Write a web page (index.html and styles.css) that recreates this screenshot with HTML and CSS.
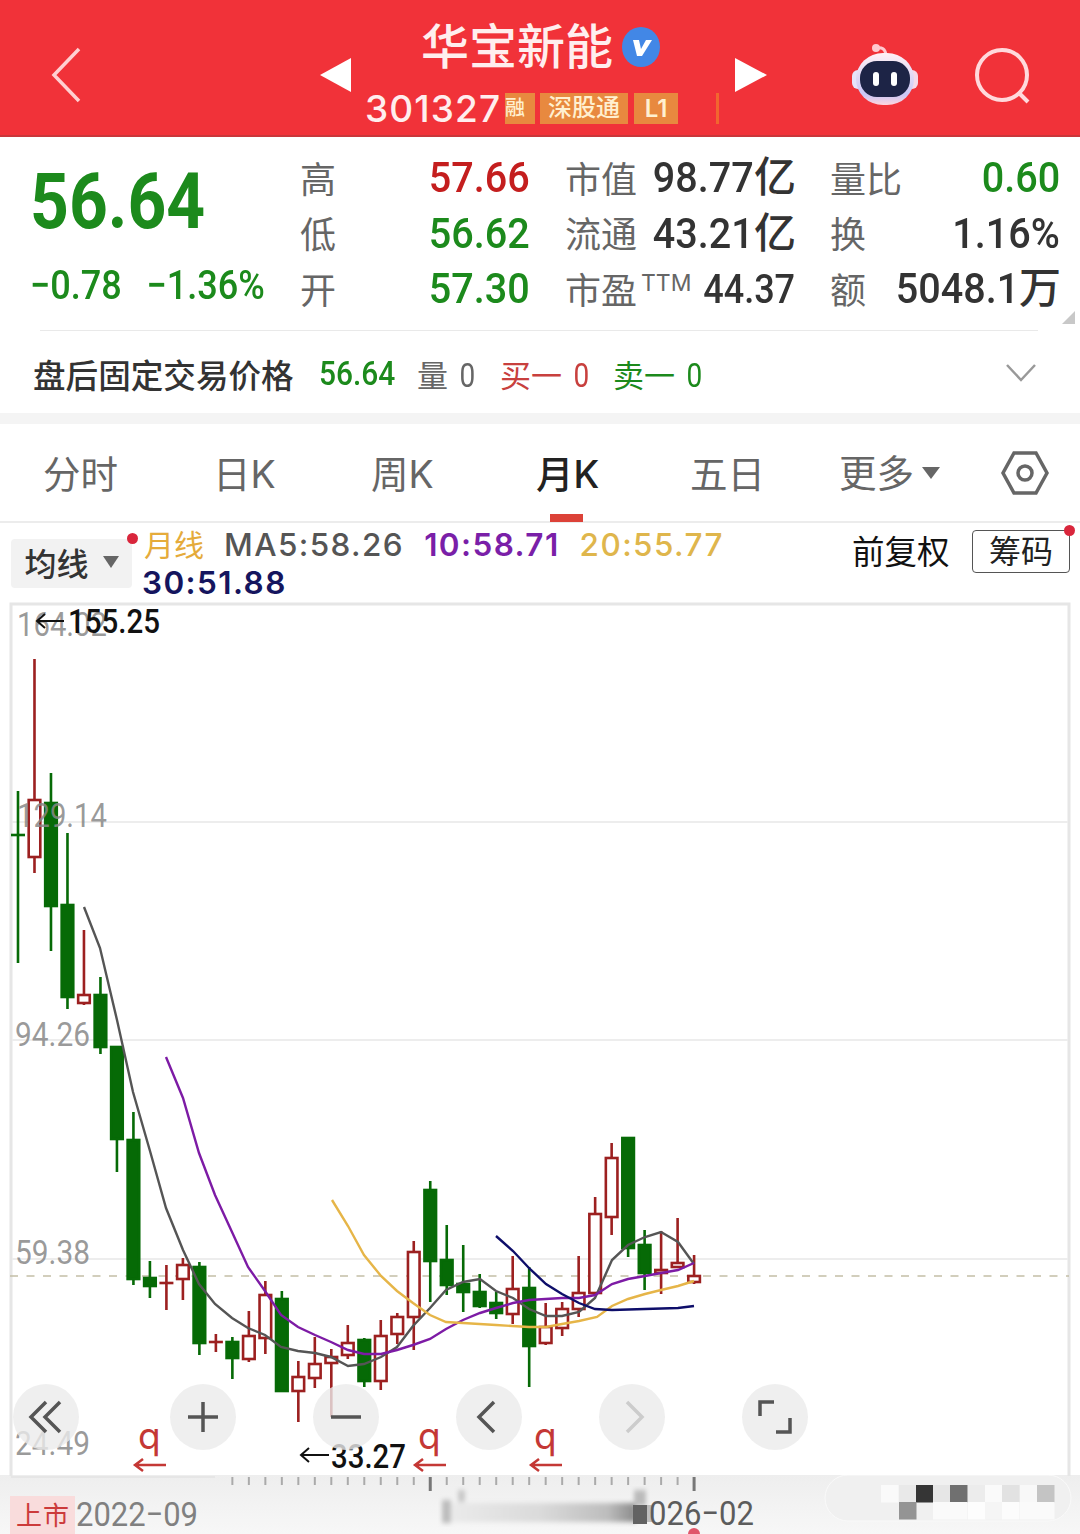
FILE: index.html
```html
<!DOCTYPE html>
<html lang="zh-CN">
<head>
    <meta charset="UTF-8">
    <meta name="viewport" content="width=device-width, initial-scale=1.0">
    <title>华宝新能 301327</title>
    <link rel="stylesheet" href="styles.css">
</head>
<body>
    <header class="header">
        <svg class="back" width="30" height="56" viewBox="0 0 30 56"><path d="M28 2L3 28l25 26"/></svg>
        <svg class="prev" width="31" height="36" viewBox="0 0 31 36"><path d="M0 18L31 1v34z"/></svg>
        <div class="stock">
            <div class="stock-name">
                <h1>华宝新能</h1>
                <svg width="38" height="40" viewBox="0 0 38 40"><ellipse cx="19" cy="20" rx="19" ry="20" fill="#4287e6"/><path d="M11 13h6l2 9 5-9h6L20 29h-5z" fill="#fff"/></svg>
            </div>
            <div class="stock-code">
                <span class="code">301327</span>
                <span class="tag tag-cut">融</span>
                <span class="tag tag-wide">深股通</span>
                <span class="tag tag-level">L1</span>
                <span class="tag-line"></span>
            </div>
        </div>
        <svg class="next" width="32" height="36" viewBox="0 0 32 36"><path d="M32 18L0 1v34z"/></svg>
        <svg class="robot" width="66" height="64" viewBox="0 0 66 64">
            <defs>
                <linearGradient id="shell" x1="0" y1="0" x2="0" y2="1">
                    <stop offset="0" stop-color="#fff0f5"/>
                    <stop offset=".8" stop-color="#c9c6f5"/>
                    <stop offset="1" stop-color="#ffd5dd"/>
                </linearGradient>
            </defs>
            <path d="M24 5q9-2 10 7" fill="none" stroke="#ffc9cf" stroke-width="3"/>
            <circle cx="24" cy="5" r="4" fill="#ffc9cf"/>
            <rect x="0" y="27" width="12" height="19" rx="6" fill="#e6e4fb"/>
            <rect x="54" y="27" width="12" height="19" rx="6" fill="#f6d9e8"/>
            <rect x="4" y="10" width="58" height="52" rx="27" fill="url(#shell)"/>
            <rect x="8" y="18" width="50" height="36" rx="17" fill="#1d2446"/>
            <rect x="21" y="29" width="6" height="14" rx="3" fill="#fff"/>
            <rect x="39" y="29" width="6" height="14" rx="3" fill="#fff"/>
        </svg>
        <svg class="search" width="56" height="56" viewBox="0 0 56 56"><circle cx="27" cy="27" r="25"/><path d="M43 44l10 10"/></svg>
    </header>

    <section class="quote">
        <div class="quote-main">
            <div class="price">56.64</div>
            <div class="change"><span>−0.78</span><span>−1.36%</span></div>
        </div>
        <dl class="stats">
            <div><dt>高</dt><dd class="up"><span>57.66</span></dd></div>
            <div><dt>低</dt><dd class="down"><span>56.62</span></dd></div>
            <div><dt>开</dt><dd class="down"><span>57.30</span></dd></div>
        </dl>
        <dl class="stats">
            <div><dt>市值</dt><dd><span>98.77</span><b>亿</b></dd></div>
            <div><dt>流通</dt><dd><span>43.21</span><b>亿</b></dd></div>
            <div><dt>市盈<sup>TTM</sup></dt><dd class="small"><span>44.37</span></dd></div>
        </dl>
        <dl class="stats">
            <div><dt>量比</dt><dd class="down"><span>0.60</span></dd></div>
            <div><dt>换</dt><dd><span>1.16%</span></dd></div>
            <div><dt>额</dt><dd><span>5048.1</span><b>万</b></dd></div>
        </dl>
        <svg class="corner" width="13" height="13" viewBox="0 0 13 13"><path d="M13 0v13H0z" fill="#c8c8c8"/></svg>
    </section>

    <section class="after-hours">
        <span class="after-title">盘后固定交易价格</span>
        <span class="num down">56.64</span>
        <span class="pair">量<i>0</i></span>
        <span class="pair buy">买一<i>0</i></span>
        <span class="pair sell">卖一<i>0</i></span>
        <svg class="chevron" width="32" height="20" viewBox="0 0 32 20"><path d="M2 2l14 15L30 2"/></svg>
    </section>

    <nav class="tabs">
        <a class="tab">分时</a>
        <a class="tab">日K</a>
        <a class="tab">周K</a>
        <a class="tab active">月K</a>
        <a class="tab">五日</a>
        <a class="tab">更多<svg width="18" height="12" viewBox="0 0 18 12"><path d="M0 0h18L9 12z" fill="#666"/></svg></a>
        <svg class="settings" width="48" height="44" viewBox="0 0 48 44"><path d="M13 2h22l11 20-11 20H13L2 22z"/><circle cx="24" cy="22" r="7"/></svg>
    </nav>

    <section class="legend">
        <button class="ma-select">均线<svg width="16" height="12" viewBox="0 0 16 12"><path d="M0 0h16L8 12z" fill="#666"/></svg><em class="dot"></em></button>
        <div class="ma-list">
            <span class="period">月线</span>
            <span class="ma5">MA5:58.26</span>
            <span class="ma10">10:58.71</span>
            <span class="ma20">20:55.77</span>
            <span class="ma30">30:51.88</span>
        </div>
        <span class="adjust">前复权</span>
        <button class="chips">筹码<em class="dot"></em></button>
    </section>

    <section class="chart">
        <svg width="1080" height="876" viewBox="0 600 1080 876">
            <path class="frame" d="M11 1476V604h1058v872"/>
            <path class="grid" d="M12 822h1056M12 1040h1056M12 1259h1056"/>
            <path class="last-price" d="M10 1276h1059"/>
            <g id="candles"></g>
            <polyline class="line line5" points="84,907 100,948 117,1020 133,1092 150,1151 166,1208 183,1250 199,1284 215,1304 232,1318 248,1328 265,1335 281,1347 298,1351 315,1353 331,1357 348,1366 364,1364 381,1357 397,1347 413,1326 430,1308 446,1290 463,1282 480,1279 496,1291 513,1298 529,1309 546,1316 562,1316 579,1312 595,1298 612,1260 628,1245 645,1237 661,1232 678,1242 694,1264"/>
            <polyline class="line line10" points="166,1057 183,1098 199,1153 215,1195 232,1232 248,1267 265,1291 281,1315 298,1327 315,1335 331,1342 348,1350 364,1354 381,1354 397,1350 413,1345 430,1339 446,1329 463,1320 480,1313 496,1308 513,1303 529,1300 562,1298 579,1298 595,1295 612,1284 628,1279 645,1276 661,1273 678,1270 694,1263"/>
            <polyline class="line line20" points="332,1200 348,1226 364,1255 381,1276 397,1291 413,1303 430,1315 446,1322 463,1323 496,1325 529,1327 546,1327 562,1324 579,1321 597,1317 612,1306 628,1299 645,1294 661,1290 678,1286 694,1281"/>
            <polyline class="line line30" points="496,1236 513,1251 529,1268 546,1284 562,1294 579,1303 595,1309 612,1310 645,1309 678,1308 694,1306"/>
            <g class="scale">
                <text x="17" y="636" textLength="90" lengthAdjust="spacingAndGlyphs">164.02</text>
                <text x="17" y="827" textLength="90" lengthAdjust="spacingAndGlyphs">129.14</text>
                <text x="15" y="1046" textLength="75" lengthAdjust="spacingAndGlyphs">94.26</text>
                <text x="15" y="1264" textLength="75" lengthAdjust="spacingAndGlyphs">59.38</text>
                <text x="15" y="1455" textLength="75" lengthAdjust="spacingAndGlyphs">24.49</text>
            </g>
            <g class="extreme">
                <path d="M64 621H37m8-7l-8 7 8 7M329 1455h-28m8-7l-8 7 8 7"/>
                <text x="68" y="633" textLength="92" lengthAdjust="spacingAndGlyphs">155.25</text>
                <text x="331" y="1468" textLength="75" lengthAdjust="spacingAndGlyphs">33.27</text>
            </g>
            <g class="rights">
                <text x="138" y="1449">q</text>
                <text x="418" y="1449">q</text>
                <text x="534" y="1449">q</text>
                <path d="M166 1465h-31m8-6l-8 6 8 6M446 1465h-31m8-6l-8 6 8 6M562 1465h-31m8-6l-8 6 8 6"/>
            </g>
        </svg>
        <div class="controls">
            <button><svg width="66" height="66" viewBox="0 0 66 66"><path d="M33 18L18 33l15 15M47 18L32 33l15 15"/></svg></button>
            <button><svg width="66" height="66" viewBox="0 0 66 66"><path d="M18 33h30M33 18v30"/></svg></button>
            <button><svg width="66" height="66" viewBox="0 0 66 66"><path d="M18 33h30"/></svg></button>
            <button><svg width="66" height="66" viewBox="0 0 66 66"><path d="M38 18L23 33l15 15"/></svg></button>
            <button class="disabled"><svg width="66" height="66" viewBox="0 0 66 66"><path d="M28 18l15 15-15 15"/></svg></button>
            <button><svg width="66" height="66" viewBox="0 0 66 66"><path d="M18 32V18h14M48 34v14H34"/></svg></button>
        </div>
    </section>

    <footer class="axis">
        <svg width="1080" height="59" viewBox="0 1475 1080 59">
            <defs>
                <linearGradient id="smear" x1="0" x2="1" y1="0" y2="0">
                    <stop offset="0" stop-color="#ebebeb"/>
                    <stop offset=".5" stop-color="#dadada"/>
                    <stop offset=".85" stop-color="#bdbdbd"/>
                    <stop offset="1" stop-color="#8a8a8a"/>
                </linearGradient>
                <filter id="soft"><feGaussianBlur stdDeviation="2 2.5"/></filter>
            </defs>
            <path class="edge" d="M11 1477h204"/>
            <g id="ticks"></g>
            <g filter="url(#soft)">
                <rect x="446" y="1503" width="190" height="19" fill="url(#smear)"/>
                <rect x="442" y="1500" width="9" height="23" fill="#bdbdbd"/>
                <rect x="458" y="1490" width="7" height="12" fill="#c8c8c8"/>
                <rect x="634" y="1490" width="12" height="16" fill="#bbb"/>
            </g>
            <rect x="633" y="1505" width="14" height="19" fill="#626262"/>
            <rect x="647" y="1505" width="5" height="17" fill="#999" opacity=".6"/>
            <rect x="10" y="1496" width="65" height="38" fill="#f9dcdc"/>
            <text class="listed" x="16" y="1525" textLength="53">上市</text>
            <text class="date" x="76" y="1526" textLength="122" lengthAdjust="spacingAndGlyphs">2022−09</text>
            <text class="date dark" x="649" y="1525" textLength="105" lengthAdjust="spacingAndGlyphs">026−02</text>
            <circle cx="694" cy="1534" r="6" fill="#e0566a"/>
            <rect x="825" y="1475" width="246" height="46" rx="23" fill="#f0f0f0" stroke="#fafafa"/>
            <g id="mosaic"></g>
        </svg>
    </footer>
    <script src="chart.js"></script>
</body>
</html>
```

FILE: styles.css
```css
* {
    box-sizing: border-box;
}
body {
    margin: 0;
    width: 1080px;
    height: 1534px;
    overflow: hidden;
    background-color: #fff;
    color: #333;
    font-family: Roboto, "Noto Sans CJK SC", sans-serif;
}
svg {
    display: block;
    flex: none;
}
button {
    border: none;
    padding: 0;
    font-family: inherit;
    position: relative;
}
.up {
    color: #c41e1e;
}
.down {
    color: #1c8a1c;
}

/* header */
.header {
    display: flex;
    height: 137px;
    background-color: #f13239;
    border-bottom: 2px solid #c9363a;
}
.back {
    margin: 47px 0 0 51px;
    fill: none;
    stroke: #ffd0d2;
    stroke-width: 3.5;
}
.prev {
    margin: 57px 14px 0 239px;
    fill: #fff;
}
.stock {
    width: 355px;
    padding-top: 15px;
}
.stock-name {
    display: flex;
    align-items: center;
    height: 64px;
    padding-left: 56px;
    gap: 9px;
}
.stock-name h1 {
    margin: 0;
    padding-top: 2px;
    font-size: 48px;
    font-weight: 500;
    line-height: 64px;
    color: #ffeeee;
    white-space: nowrap;
}
.stock-code {
    display: flex;
    align-items: center;
    height: 58px;
}
.code {
    width: 140px;
    font-family: Inter, sans-serif;
    font-size: 37px;
    font-weight: 500;
    letter-spacing: 1.1px;
    color: #ffeeee;
}
.tag {
    height: 31px;
    background-color: #e8893f;
    color: #fff0d0;
    font-size: 24px;
    font-weight: 500;
    line-height: 31px;
    text-align: center;
    white-space: nowrap;
}
.tag-cut {
    width: 30px;
    font-size: 20px;
    text-align: left;
}
.tag-wide {
    width: 88px;
    margin-left: 5px;
}
.tag-level {
    width: 44px;
    margin-left: 6px;
    font-family: Inter, sans-serif;
    font-weight: 600;
}
.tag-line {
    width: 3px;
    height: 31px;
    margin-left: 38px;
    background-color: #f2662f;
}
.next {
    margin: 57px 0 0 15px;
    fill: #fff;
}
.robot {
    margin: 43px 0 0 85px;
}
.search {
    margin: 48px 0 0 57px;
    fill: none;
    stroke: #ffd9dc;
    stroke-width: 4;
}

/* quote */
.quote {
    display: flex;
    height: 193px;
    padding: 13px 20px 0 30px;
    position: relative;
}
.quote-main {
    width: 270px;
    color: #1c8a1c;
}
.price {
    height: 104px;
    font-size: 77px;
    font-weight: 700;
    line-height: 104px;
    transform: scaleX(.88);
    transform-origin: left;
}
.change {
    display: flex;
    gap: 28px;
    font-size: 41px;
    font-weight: 500;
    line-height: 62px;
    white-space: nowrap;
    transform: scaleX(.88);
    transform-origin: left;
}
.stats {
    width: 230px;
    margin: 0 35px 0 0;
}
.stats:last-of-type {
    margin-right: 0;
}
.stats div {
    display: flex;
    justify-content: space-between;
    align-items: center;
    height: 55.5px;
    line-height: 55px;
    white-space: nowrap;
}
.stats dt {
    padding-top: 7px;
    font-size: 36px;
    color: #666;
}
.stats dd {
    margin: 0;
    font-size: 43px;
    font-weight: 500;
}
.stats dd span {
    display: inline-block;
    transform: scaleX(.92);
    transform-origin: right;
}
.stats dd.small {
    padding-top: 2px;
    font-size: 40px;
}
.stats dd.small span {
    transform: scaleX(.9);
}
.stats b {
    margin-right: -1px;
    font-size: 42px;
    font-weight: 500;
    line-height: 40px;
}
.stats sup {
    margin-left: 4px;
    font-family: Inter, sans-serif;
    font-size: 23px;
    line-height: 10px;
}
/* the long label must not push the value out of the column */
.stats dt, .stats dd {
    flex: none;
}
.stats dd {
    margin-left: -20px;
}
.corner {
    position: absolute;
    right: 5px;
    bottom: 6px;
}

/* after hours */
.after-hours {
    display: flex;
    align-items: center;
    height: 94px;
    padding: 3px 43px 0 33px;
    border-bottom: 11px solid #f4f4f4;
    background: linear-gradient(#e9e9e9, #e9e9e9) 40px 0 / 998px 1px no-repeat;
    white-space: nowrap;
}
.after-title {
    width: 286px;
    font-size: 32.6px;
    font-weight: 500;
}
.num {
    width: 98px;
    font-size: 34px;
    font-weight: 500;
    transform: scaleX(.88);
    transform-origin: left;
}
.pair {
    width: 83px;
    font-size: 31px;
    color: #666;
}
.pair i {
    margin-left: 10px;
    font-style: normal;
    font-size: 33px;
    display: inline-block;
    transform: scaleX(.85);
}
.buy {
    width: 113px;
    color: #c8403e;
}
.sell {
    color: #1c8a1c;
}
.chevron {
    margin-left: auto;
    fill: none;
    stroke: #999;
    stroke-width: 2.5;
}

/* tabs */
.tabs {
    display: flex;
    height: 99px;
    padding-left: 43px;
    border-bottom: 2px solid #ececec;
    font-size: 37.5px;
    font-weight: 400;
    line-height: 101px;
    color: #666;
    white-space: nowrap;
}
.tab {
    width: 170px;
    height: 98px;
    font-family: Inter, "Noto Sans CJK SC", sans-serif;
}
.tab:nth-child(2) {
    width: 158px;
}
.tab:nth-child(3) {
    width: 165px;
}
.tab:nth-child(4) {
    width: 154px;
}
.tab:nth-child(5) {
    width: 149px;
}
.tab:nth-child(6) {
    display: flex;
    align-items: center;
    gap: 8px;
    width: 162px;
}
.tab.active {
    font-weight: 500;
    color: #222;
    background: linear-gradient(#dc4238, #dc4238) 14px 90px / 33px 8px no-repeat;
}
.settings {
    margin-top: 27px;
    fill: none;
    stroke: #666;
    stroke-width: 3.5;
}

/* legend */
.legend {
    display: flex;
    height: 77px;
    padding-left: 11px;
}
.ma-select {
    display: flex;
    align-items: center;
    justify-content: center;
    gap: 14px;
    width: 121px;
    height: 49px;
    margin-top: 16px;
    padding-bottom: 3px;
    border-radius: 4px;
    background-color: #f2f2f2;
    color: #333;
    font-size: 32px;
    font-weight: 500;
}
.dot {
    position: absolute;
    top: -6px;
    right: -6px;
    width: 11px;
    height: 11px;
    border-radius: 50%;
    background-color: #d9263c;
}
.ma-list {
    display: flex;
    flex-wrap: wrap;
    align-content: flex-start;
    column-gap: 20px;
    width: 720px;
    padding: 3px 110px 0 12px;
    font-family: Inter, "Noto Sans CJK SC", sans-serif;
    font-size: 31.5px;
    font-weight: 500;
    line-height: 38px;
    letter-spacing: 1.4px;
    white-space: nowrap;
}
.period {
    font-size: 30px;
    font-weight: 400;
    letter-spacing: 0;
    color: #e5ab3b;
}
.ma5 {
    color: #555;
}
.ma10 {
    color: #7a1fa8;
    font-weight: 600;
}
.ma20 {
    color: #dfb64c;
}
.ma30 {
    margin-left: -2px;
    color: #15155e;
    font-weight: 600;
}
.adjust {
    width: 120px;
    font-size: 32.5px;
    line-height: 60px;
    color: #111;
}
.chips {
    width: 98px;
    height: 43px;
    margin-top: 7px;
    border: 1.5px solid #555;
    border-radius: 4px;
    background-color: #fff;
    color: #222;
    font-size: 32px;
    line-height: 38px;
}

/* chart */
.chart {
    position: relative;
    height: 875px;
}
.frame {
    fill: none;
    stroke: #e6e6e6;
    stroke-width: 3;
}
.grid {
    stroke: #ededed;
    stroke-width: 2;
}
.last-price {
    stroke: #c3bfa6;
    stroke-width: 1.5;
    stroke-dasharray: 8 8.5;
}
.rise {
    fill: #fff;
    stroke: #9c2020;
    stroke-width: 2.6;
}
.fall {
    fill: #066a06;
    stroke: #066a06;
    stroke-width: 2.6;
}
.line {
    fill: none;
    stroke-width: 2.4;
}
.line5 {
    stroke: #555;
}
.line10 {
    stroke: #7d1ba5;
}
.line20 {
    stroke: #e6b548;
}
.line30 {
    stroke: #0e0e6a;
}
.scale {
    fill: #888;
    fill-opacity: .85;
    font-size: 34px;
}
.extreme {
    fill: #111;
    font-size: 34px;
    font-weight: 500;
}
.extreme path {
    fill: none;
    stroke: #111;
    stroke-width: 2;
}
.rights {
    fill: #c43835;
    font-family: Inter, sans-serif;
    font-size: 37px;
}
.rights path {
    fill: none;
    stroke: #c43835;
    stroke-width: 2.5;
}
.controls {
    position: absolute;
    left: 13px;
    right: 272px;
    bottom: 25px;
    display: flex;
    justify-content: space-between;
}
.controls button {
    width: 66px;
    height: 66px;
    border-radius: 50%;
    background-color: rgba(235, 235, 235, .8);
}
.controls button:first-child {
    margin-right: 14px;
}
.controls path {
    fill: none;
    stroke: #555;
    stroke-width: 3.5;
}
.controls .disabled path {
    stroke: #ccc;
}

/* time axis */
.axis {
    height: 59px;
    background: linear-gradient(#eee, #f7f7f7);
}
.edge {
    stroke: #e6e6e6;
    stroke-width: 2;
}
.tick {
    stroke: #aaa;
    stroke-width: 2;
}
.tick-major {
    stroke: #777;
    stroke-width: 3;
}
.listed {
    fill: #cc3b3b;
    font-size: 26px;
}
.date {
    fill: #808080;
    font-size: 34px;
}
.dark {
    fill: #5c5c5c;
}
```

FILE: chart.js
```js
// one row per month: high, body top, body bottom, low, rise(1) / fall(0)
var candles = [
    [791, 835, 835, 963, 0],
    [659, 800, 857, 873, 1],
    [773, 803, 906, 951, 0],
    [833, 905, 997, 1009, 0],
    [930, 995, 1003, 1005, 1],
    [977, 995, 1047, 1054, 0],
    [1047, 1047, 1139, 1172, 0],
    [1112, 1140, 1279, 1285, 0],
    [1261, 1278, 1286, 1298, 0],
    [1265, 1283, 1283, 1310, 1],
    [1258, 1265, 1279, 1300, 1],
    [1262, 1267, 1343, 1355, 0],
    [1334, 1342, 1342, 1352, 1],
    [1337, 1342, 1358, 1379, 0],
    [1311, 1336, 1359, 1362, 1],
    [1281, 1295, 1338, 1354, 1],
    [1291, 1299, 1391, 1391, 0],
    [1361, 1377, 1391, 1422, 1],
    [1337, 1364, 1378, 1388, 1],
    [1349, 1357, 1363, 1417, 1],
    [1325, 1343, 1355, 1359, 1],
    [1338, 1340, 1381, 1387, 0],
    [1320, 1336, 1381, 1390, 1],
    [1313, 1317, 1334, 1344, 1],
    [1241, 1252, 1317, 1350, 1],
    [1181, 1190, 1261, 1302, 0],
    [1225, 1260, 1285, 1295, 0],
    [1245, 1284, 1292, 1312, 0],
    [1274, 1292, 1306, 1308, 0],
    [1292, 1303, 1313, 1319, 0],
    [1256, 1289, 1314, 1324, 1],
    [1267, 1288, 1346, 1387, 0],
    [1303, 1327, 1343, 1345, 1],
    [1302, 1309, 1328, 1336, 1],
    [1256, 1293, 1309, 1317, 1],
    [1197, 1214, 1293, 1294, 1],
    [1143, 1158, 1217, 1235, 1],
    [1137, 1138, 1248, 1257, 0],
    [1230, 1245, 1273, 1290, 0],
    [1231, 1270, 1273, 1294, 1],
    [1218, 1263, 1267, 1268, 1],
    [1255, 1276, 1282, 1284, 1]
];
var step = 16.49;
var html = '';
candles.forEach(function(c, i) {
    var x = 18 + i * step;
    html += '<g class="' + (c[4] ? 'rise' : 'fall') + '">' +
        '<path d="M' + x + ' ' + c[0] + 'V' + c[1] + 'M' + x + ' ' + c[2] + 'V' + c[3] + '"/>' +
        '<rect x="' + (x - 5.8) + '" y="' + c[1] + '" width="11.6" height="' + (c[2] - c[1]) + '"/>';
    if (c[1] === c[2]) {
        html += '<path d="M' + (x - 7) + ' ' + c[1] + 'h14"/>';
    }
    html += '</g>';
});
document.getElementById('candles').innerHTML = html;

var ticks = '';
for (var i = 13; i < 42; i++) {
    var major = i === 25 || i === 41;
    ticks += '<path class="tick' + (major ? ' tick-major' : '') + '" d="M' + (18 + i * step) + ' 1477v' + (major ? 14 : 8) + '"/>';
}
document.getElementById('ticks').innerHTML = ticks;

// x, y, colour
var blocks = [
    [881, 1485, '#fafafa'], [899, 1485, '#e9e9e9'], [916, 1485, '#353535'],
    [933, 1485, '#e6e6e6'], [950, 1485, '#707070'], [968, 1485, '#ececec'],
    [985, 1485, '#fafafa'], [1002, 1485, '#e2e2e2'], [1020, 1485, '#f8f8f8'],
    [1037, 1485, '#c4c4c4'], [899, 1502, '#949494'], [933, 1502, '#fafafa'],
    [950, 1502, '#fafafa'], [968, 1502, '#fdfdfd'], [985, 1502, '#f5f5f5'],
    [1002, 1502, '#fcfcfc'], [1020, 1502, '#fafafa'], [1037, 1502, '#fafafa']
];
document.getElementById('mosaic').innerHTML = blocks.map(function(b) {
    return '<rect x="' + b[0] + '" y="' + b[1] + '" width="17.5" height="17.5" fill="' + b[2] + '"/>';
}).join('');
```
